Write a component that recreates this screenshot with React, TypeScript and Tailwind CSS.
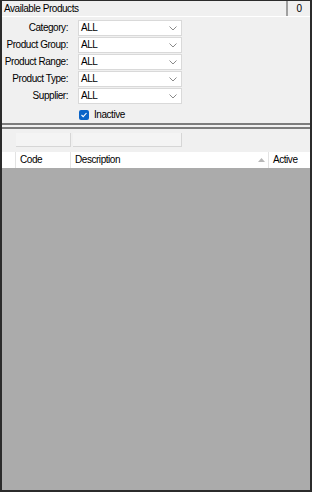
const filters = ["Category:", "Product Group:", "Product Range:", "Product Type:", "Supplier:"];

function Chevron() {
  return (
    <svg width="8" height="5" viewBox="0 0 8 5" className="text-[#8a8a8a]">
      <path d="M0.5 0.5 L4 4 L7.5 0.5" fill="none" stroke="currentColor" strokeWidth="1" />
    </svg>
  );
}

export default function App() {
  return (
    <div
      className="w-[312px] h-[492px] flex flex-col bg-[#f0f0f0] border-2 border-t border-[#2b2b2b] text-[10px] tracking-[-0.45px] text-black overflow-hidden"
      style={{ fontFamily: '"Liberation Sans", Arial, sans-serif' }}
    >
      {/* title strip */}
      <div className="flex h-[16px] items-center border-b border-white">
        <span className="flex-1 pl-[2px] pt-[1px] leading-none whitespace-nowrap">Available Products</span>
        <div className="w-[24px] h-full flex items-center justify-center border-l-2 border-[#a0a0a0] leading-none">0</div>
      </div>

      {/* filters */}
      <div className="flex flex-col gap-[1px] pt-[3px] border-b-2 border-[#7c7c7c]">
        {filters.map((f) => (
          <div key={f} className="flex items-center h-[16px]">
            <span className="w-[66px] shrink-0 text-right leading-none whitespace-nowrap">{f}</span>
            <div className="ml-[10px] w-[104px] h-[16px] bg-white border border-[#d9d9d9] flex items-center justify-between pl-[2px] pr-[4px]">
              <span className="leading-none">ALL</span>
              <Chevron />
            </div>
          </div>
        ))}
        <div className="flex items-center h-[16px] pl-[77px] mt-[2px]">
          <div className="w-[10px] h-[10px] rounded-[2px] bg-[#0a64c8] flex items-center justify-center">
            <svg width="8" height="8" viewBox="0 0 8 8">
              <path d="M1.5 4 L3.2 5.7 L6.5 2" fill="none" stroke="white" strokeWidth="1.1" />
            </svg>
          </div>
          <span className="ml-[5px] leading-none">Inactive</span>
        </div>
      </div>

      {/* toolbar */}
      <div className="mt-[2px] border-t-2 border-[#7c7c7c] flex items-start gap-[2px] pl-[14px] pt-[4px] h-[25px]">
        <div className="w-[55px] h-[14px] bg-[#f4f4f4] border-b border-r border-[#d6d6d6]" />
        <div className="w-[109px] h-[14px] bg-[#f4f4f4] border-b border-r border-[#d6d6d6]" />
      </div>

      {/* grid header */}
      <div className="flex h-[16px] bg-white">
        <div className="w-[14px] border-r border-[#e3e3e3]" />
        <div className="w-[55px] border-r border-[#e3e3e3] pl-[4px] flex items-center leading-none">Code</div>
        <div className="flex-1 border-r border-[#e3e3e3] pl-[4px] pr-[3px] flex items-center justify-between leading-none">
          <span>Description</span>
          <svg width="7" height="4" viewBox="0 0 7 4"><path d="M0 4 L3.5 0 L7 4 Z" fill="#b8b8b8" /></svg>
        </div>
        <div className="w-[41px] pl-[4px] flex items-center leading-none">Active</div>
      </div>

      {/* grid body */}
      <div className="flex-1 bg-[#ababab]" />
    </div>
  );
}
